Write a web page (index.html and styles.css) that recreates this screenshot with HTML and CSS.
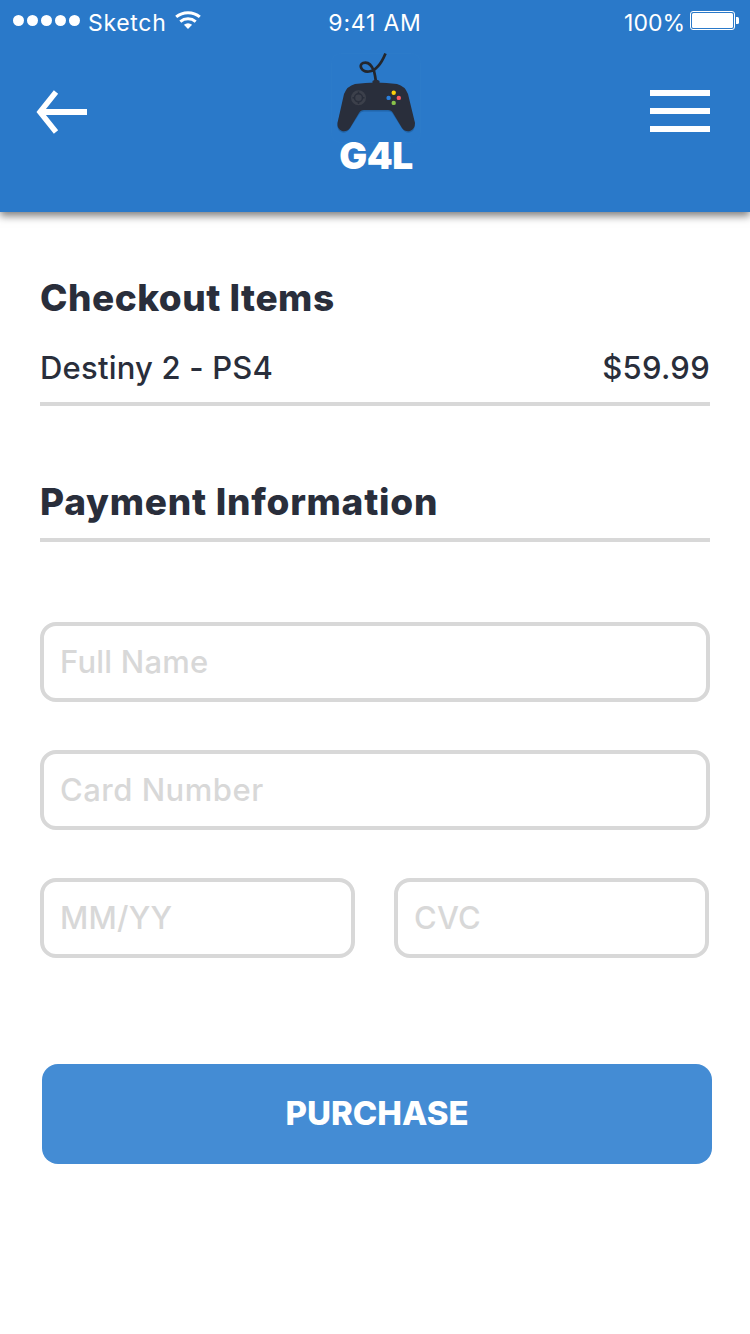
FILE: index.html
```
<!DOCTYPE html>
<html lang="en">
<head>
    <meta charset="UTF-8">
    <meta name="viewport" content="width=device-width, initial-scale=1.0">
    <title>G4L - Checkout</title>
    <link rel="stylesheet" href="styles.css">
</head>
<body>
    <header class="header">
        <div class="status-bar">
            <div class="status-left">
                <svg class="signal" width="68" height="12" viewBox="0 0 68 12" fill="#fff">
                    <circle cx="5.5" cy="5.5" r="5.5"/>
                    <circle cx="19.5" cy="5.5" r="5.5"/>
                    <circle cx="33.5" cy="5.5" r="5.5"/>
                    <circle cx="47.5" cy="5.5" r="5.5"/>
                    <circle cx="61.5" cy="5.5" r="5.5"/>
                </svg>
                <span class="carrier">Sketch</span>
                <svg class="wifi" width="26" height="19" viewBox="0 0 26 19" fill="none" stroke="#fff" stroke-width="3">
                    <path d="M1.2 5.9C7.8 .2 18.2 .2 24.8 5.9"/>
                    <path d="M5.3 10.6C9.8 6.9 16.2 6.9 20.7 10.6"/>
                    <path d="M13 18L8.9 13.8Q13 10.6 17.1 13.8Z" fill="#fff" stroke="none"/>
                </svg>
            </div>
            <span class="time">9:41 AM</span>
            <div class="status-right">
                <span class="percent">100%</span>
                <svg class="battery" width="49" height="19" viewBox="0 0 49 19">
                    <rect x=".5" y=".5" width="44" height="18" rx="2.5" fill="none" stroke="#fff"/>
                    <rect x="2" y="2" width="41" height="15" rx="1.5" fill="#fff"/>
                    <path d="M46 6h1.5q1.5 0 1.5 1.5v4q0 1.5-1.5 1.5H46z" fill="#fff"/>
                </svg>
            </div>
        </div>
        <nav class="nav">
            <a class="back" href="#" aria-label="Back">
                <svg width="52" height="44" viewBox="0 0 52 44" fill="none" stroke="#fff">
                    <path d="M20 2L4 22L20 42" stroke-width="5.5"/>
                    <path d="M5 22H51" stroke-width="6"/>
                </svg>
            </a>
            <a class="logo" href="#">
                <svg width="90" height="90" viewBox="0 0 90 90">
                    <rect x=".5" y=".5" width="89" height="89" rx="9" fill="none" stroke="#2c7bc9"/>
                    <g fill="#1d5896" opacity=".6" transform="translate(0 1.5)">
                        <path d="M24 31Q45 27 66 31Q73 33 76 41L84 70Q84 76 79 78Q74 79 71 74L62 60Q61 57 57 57H33Q30 57 28 60L19 74Q16 79 11 78Q6 76 6 70L14 41Q17 33 24 31Z"/>
                    </g>
                    <path d="M54.5 0.500C51 9 46 17.500 38 18.500C30 19.500 27.500 11.500 32 10C38 8 41 13 43 18C44 22 44.500 25 45 29" fill="none" stroke="#23262c" stroke-width="2.7"/>
                    <path d="M41.500 31V28Q45 25 48.500 28V31Z" fill="#292e3b"/>
                    <path d="M24 31Q45 28 66 31Q74 33 77 41L84 70Q84 76 79 78Q74 79 71 75L62 60Q60.5 57 57 57H33Q29.5 57 28 60L19 75Q16 79 11 78Q6 76 6.5 70L13 41Q16 33 24 31Z" fill="#292e3b"/>
                    <circle cx="27.5" cy="44.8" r="7.5" fill="#3c404b"/>
                    <circle cx="27.5" cy="44.8" r="4" fill="none" stroke="#292e3b" stroke-width="1.5"/>
                    <path d="M27.5 38.5v2M27.5 49v2M21.5 44.8h2M31.5 44.8h2" stroke="#292e3b" stroke-width="1.5"/>
                    <circle cx="62.7" cy="39.8" r="2.2" fill="#fdd209"/>
                    <circle cx="67.8" cy="44.9" r="2.2" fill="#fb5a61"/>
                    <circle cx="57.6" cy="44.9" r="2.2" fill="#2a7fdc"/>
                    <circle cx="62.7" cy="49.9" r="2.2" fill="#89c34b"/>
                </svg>
                <span class="logo-name">G4L</span>
            </a>
            <a class="menu" href="#" aria-label="Menu">
                <span></span>
                <span></span>
                <span></span>
            </a>
        </nav>
    </header>

    <main class="checkout">
        <h1 class="title items-title">Checkout Items</h1>
        <div class="item">
            <span class="item-name">Destiny 2 - PS4</span>
            <span class="item-price">$59.99</span>
        </div>

        <h1 class="title payment-title">Payment Information</h1>

        <form class="payment-form">
            <input class="full-name" type="text" placeholder="Full Name">
            <input class="card-number" type="text" placeholder="Card Number">
            <div class="row">
                <input class="expiry" type="text" placeholder="MM/YY">
                <input class="cvc" type="text" placeholder="CVC">
            </div>
            <button class="purchase" type="button">PURCHASE</button>
        </form>
    </main>
</body>
</html>
```
FILE: styles.css
```
* {
    box-sizing: border-box;
}

body {
    margin: 0;
    font-family: Inter, "Liberation Sans", sans-serif;
    color: #292e3b;
    background-color: #ffffff;
}

/* Header */
.header {
    height: 212px;
    background-color: #2a79c9;
    box-shadow: 0 4px 8px rgba(0, 0, 0, 0.5);
}

.status-bar {
    display: grid;
    grid-template-columns: 1fr auto 1fr;
    height: 40px;
    padding: 9px 11px 0 13px;
    color: #ffffff;
    font-size: 23px;
    line-height: 28px;
}

.status-left,
.status-right {
    display: flex;
    align-items: flex-start;
}

.status-right {
    justify-content: flex-end;
}

.signal {
    margin: 6px 7px 0 0;
}

.carrier {
    letter-spacing: 0.7px;
}

.wifi {
    margin: 2px 0 0 8px;
}

.time {
    margin-right: 2px;
    letter-spacing: 0.8px;
}

.battery {
    margin: 2px 0 0 5px;
}

.nav {
    display: flex;
    justify-content: space-between;
    align-items: flex-start;
    padding: 0 40px 0 36px;
}

.back {
    width: 66px;
    padding-top: 50px;
}

.back svg,
.logo svg {
    display: block;
}

.logo {
    display: flex;
    flex-direction: column;
    align-items: center;
    padding-top: 13px;
    color: #ffffff;
    text-decoration: none;
}

.logo-name {
    margin-top: -9px;
    font-size: 37px;
    font-weight: 900;
    letter-spacing: -0.5px;
    line-height: 44px;
}

.menu {
    display: flex;
    flex-direction: column;
    gap: 12px;
    width: 60px;
    padding-top: 50px;
}

.menu span {
    height: 6px;
    background-color: #ffffff;
}

/* Checkout */
.checkout {
    padding: 62px 40px 0;
}

.title {
    margin: 0;
    font-size: 37px;
    font-weight: 800;
    line-height: 48px;
}

.items-title {
    letter-spacing: 0.5px;
}

.item {
    display: flex;
    justify-content: space-between;
    margin-top: 26px;
    height: 58px;
    border-bottom: 4px solid #d8d8d8;
    font-size: 31px;
    font-weight: 500;
    line-height: 40px;
}

.item-name {
    letter-spacing: 0.2px;
}

.item-price {
    letter-spacing: 0.3px;
}

.payment-title {
    height: 64px;
    margin-top: 72px;
    border-bottom: 4px solid #d8d8d8;
    letter-spacing: 0.75px;
}

.payment-form {
    display: flex;
    flex-direction: column;
    gap: 48px;
    margin-top: 80px;
}

.payment-form input {
    width: 100%;
    height: 80px;
    padding: 0 16px 2px;
    border: 4px solid #d8d8d8;
    border-radius: 16px;
    background-color: #ffffff;
    color: #292e3b;
    font-family: inherit;
    font-size: 31px;
    font-weight: 500;
    letter-spacing: 0.2px;
}

.payment-form .card-number {
    letter-spacing: 0.5px;
}

.payment-form input::placeholder {
    color: #d8d8d8;
    opacity: 1;
}

.row {
    display: flex;
    gap: 39px;
    padding-right: 1px;
}

.purchase {
    width: 670px;
    height: 100px;
    margin: 58px 0 0 2px;
    padding: 0 0 2px;
    border: none;
    border-radius: 16px;
    background-color: #448cd4;
    color: #ffffff;
    font-family: inherit;
    font-size: 33px;
    font-weight: 800;
}
```
